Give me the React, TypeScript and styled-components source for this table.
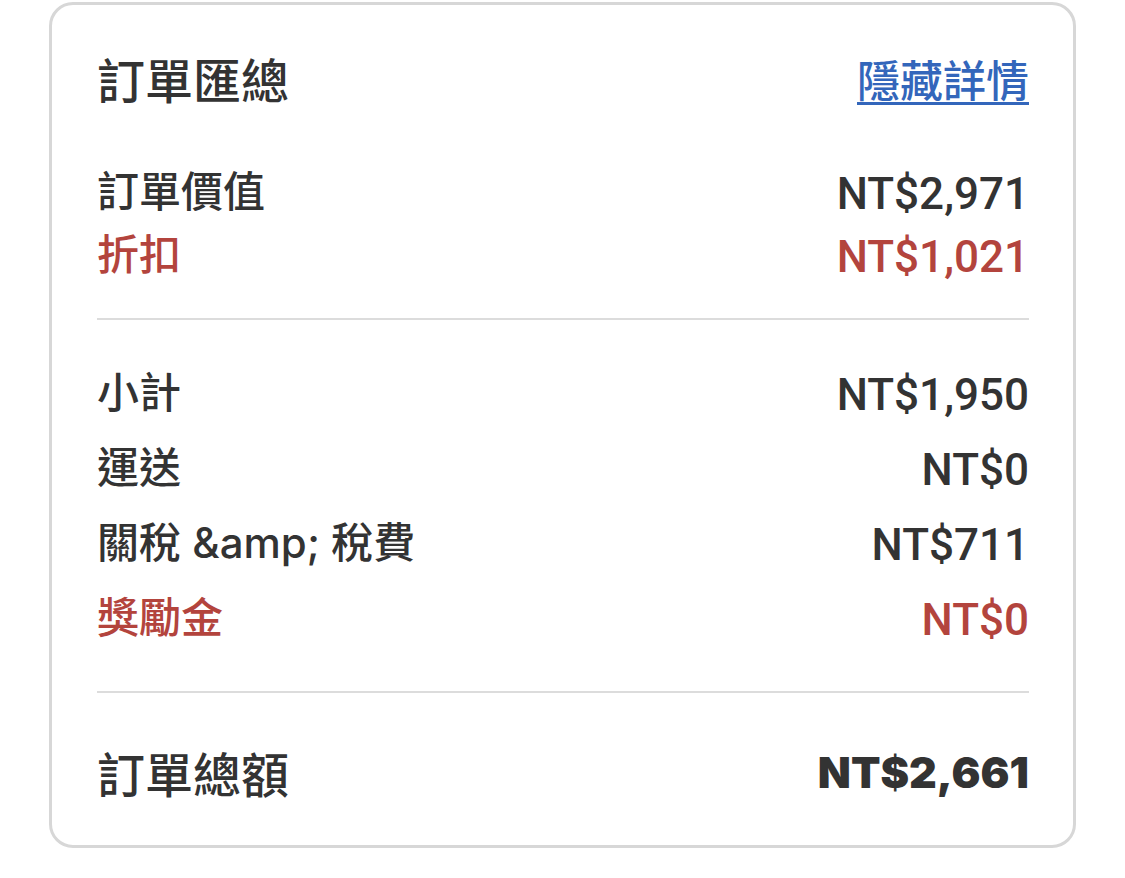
import React from "react";
import styled, { createGlobalStyle } from "styled-components";

const GlobalStyle = createGlobalStyle`
  body {
    margin: 0;
    background: #ffffff;
    font-family: "Roboto", "Noto Sans CJK TC", sans-serif;
    color: #333333;
  }
`;

type Line = { label: string; value: string; accent?: boolean };

const orderLines: Line[] = [
  { label: "訂單價值", value: "NT$2,971" },
  { label: "折扣", value: "NT$1,021", accent: true },
];

const costLines: Line[] = [
  { label: "小計", value: "NT$1,950" },
  { label: "運送", value: "NT$0" },
  { label: "關稅 &amp; 稅費", value: "NT$711" },
  { label: "獎勵金", value: "NT$0", accent: true },
];

const App: React.FC = () => {
  return (
    <>
      <GlobalStyle />
      <Page>
        <Card>
          <Header>
            <Title>訂單匯總</Title>
            <ToggleLink href="#">隱藏詳情</ToggleLink>
          </Header>

          <Group $pad="48px 0 30px" $row={63}>
            {orderLines.map((l) => (
              <Row key={l.label} $accent={l.accent}>
                <Label>{l.label}</Label>
                <Value>{l.value}</Value>
              </Row>
            ))}
          </Group>

          <Divider />

          <Group $pad="37px 0 34px" $row={75}>
            {costLines.map((l) => (
              <Row key={l.label} $accent={l.accent}>
                <Label>{l.label}</Label>
                <Value>{l.value}</Value>
              </Row>
            ))}
          </Group>

          <Divider />

          <TotalRow>
            <TotalLabel>訂單總額</TotalLabel>
            <TotalValue>NT$2,661</TotalValue>
          </TotalRow>
        </Card>
      </Page>
    </>
  );
};

export default App;

const Page = styled.div`
  padding: 2px 0 0 49px;
  width: 1027px;
`;

const Card = styled.div`
  border: 3px solid #d7d7d7;
  border-radius: 24px;
  padding: 37px 44px 37px 45px;
  display: flex;
  flex-direction: column;
  background: #fff;
`;

const Header = styled.div`
  display: flex;
  justify-content: space-between;
  align-items: center;
  height: 72px;
`;

const Title = styled.h2`
  margin: 0;
  font-family: "Noto Sans CJK TC", sans-serif;
  font-size: 48px;
  font-weight: 500;
  color: #333;
  line-height: 66px;
`;

const ToggleLink = styled.a`
  font-family: "Noto Sans CJK TC", sans-serif;
  font-size: 43px;
  font-weight: 500;
  color: #3366bb;
  text-decoration: underline;
  text-decoration-thickness: 3px;
  text-underline-offset: 5px;
  line-height: 66px;
`;

const Group = styled.div<{ $pad: string; $row: number }>`
  display: flex;
  flex-direction: column;
  padding: ${(p) => p.$pad};

  & > div {
    height: ${(p) => p.$row}px;
  }
`;

const Row = styled.div<{ $accent?: boolean }>`
  display: flex;
  justify-content: space-between;
  align-items: center;
  color: ${(p) => (p.$accent ? "#b3443d" : "#333333")};
`;

const Label = styled.span`
  font-family: "Inter", "Noto Sans CJK TC", sans-serif;
  font-size: 42px;
  font-weight: 500;
  line-height: 56px;
  margin-bottom: 4px;
`;

const Value = styled.span`
  font-family: "Roboto", sans-serif;
  font-size: 44px;
  font-weight: 500;
`;

const Divider = styled.hr`
  margin: 0;
  border: none;
  height: 2px;
  background: #dcdcdc;
`;

const TotalRow = styled.div`
  display: flex;
  justify-content: space-between;
  align-items: center;
  height: 72px;
  margin-top: 43px;
`;

const TotalLabel = styled.span`
  font-family: "Noto Sans CJK TC", sans-serif;
  font-size: 48px;
  font-weight: 500;
  color: #333;
`;

const TotalValue = styled.span`
  font-family: "Inter", sans-serif;
  font-size: 43px;
  font-weight: 900;
  color: #333;
`;
